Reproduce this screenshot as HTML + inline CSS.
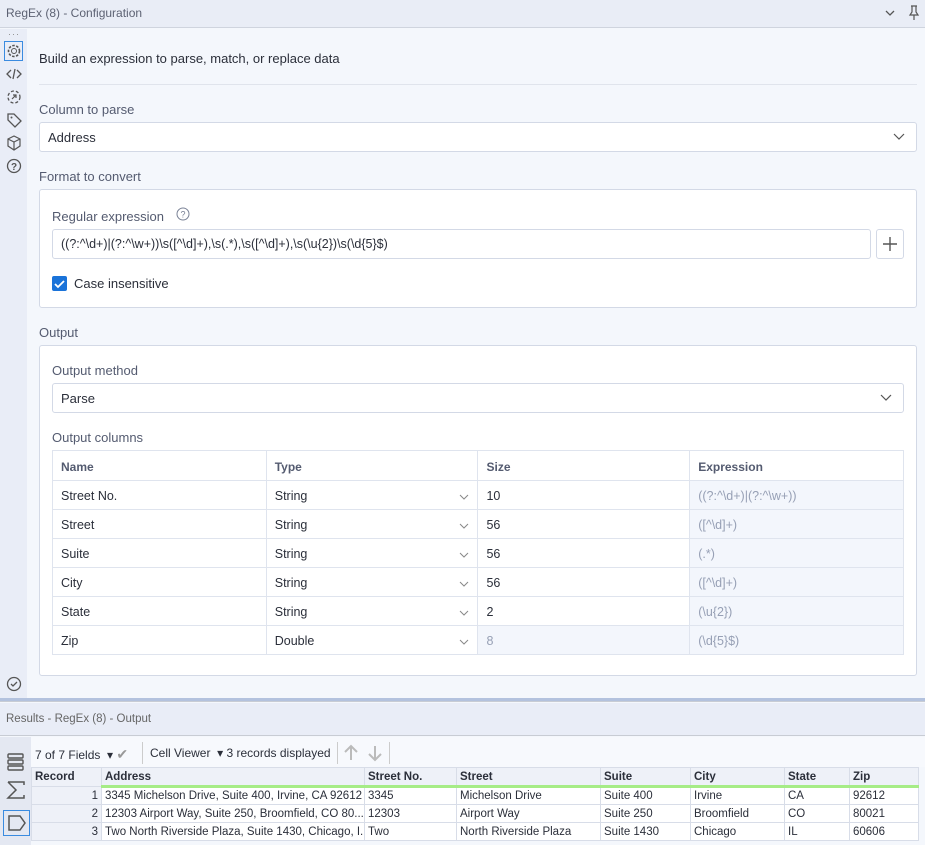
<!DOCTYPE html>
<html><head><style>
*{box-sizing:border-box;margin:0;padding:0}
body{width:925px;height:845px;overflow:hidden;background:#f4f7fc;font-family:"Liberation Sans",sans-serif;font-size:13px;color:#2b2f3a;position:relative}
.a{position:absolute}
.lbl{color:#545b70;font-size:13px}
.box{border:1px solid #d3d9e6;background:#fff;border-radius:3px}
.grid td{border-right:1px solid #dfe4ee;border-bottom:1px solid #dfe4ee;padding:0 8px;height:29px;font-size:12.5px;padding-top:2px}
.chev{float:right;margin-top:4px}
.rg td{border:1px solid #d8dde8;height:18px;padding:0 3px;font-size:11.5px;background:#fff;white-space:nowrap;overflow:hidden}
.rg th{border:1px solid #d8dde8;border-bottom:3px solid #a6ec86;height:19px;padding:0 3px;font-size:11.5px;text-align:left;background:#eef1f8}
</style></head><body>
<div class="a" style="left:0;top:0;width:925px;height:28px;background:#e9edf6;border-bottom:1px solid #cfd4de"></div>
<div class="a" style="left:6px;top:6px;font-size:12px;color:#5d6273">RegEx (8) - Configuration</div>
<svg class="a" style="left:884px;top:8px" width="12" height="10"><path d="M2 3l4 4 4-4" stroke="#555" fill="none" stroke-width="1.3"/></svg>
<svg class="a" style="left:907px;top:5px" width="14" height="16"><path d="M4 1h6M5 1v6l-2 3h8l-2-3V1M7 10v5" stroke="#555" fill="none" stroke-width="1.2"/></svg>
<div class="a" style="left:0;top:29px;width:27px;height:670px;background:#e9edf7"></div>
<div class="a" style="left:8px;top:29px;font-size:9px;color:#888;letter-spacing:1px">···</div>
<div class="a" style="left:4px;top:41px;width:19px;height:20px;border:1px solid #3a8be0"></div>
<svg class="a" style="left:6px;top:43px" width="16" height="16"><circle cx="8" cy="8" r="2.5" stroke="#555" fill="none"/><circle cx="8" cy="8" r="5.5" stroke="#555" fill="none" stroke-dasharray="2.5 1.5" stroke-width="1.6"/></svg>
<svg class="a" style="left:6px;top:67px" width="16" height="14"><path d="M5 3L1 7l4 4M11 3l4 4-4 4M9 2L7 12" stroke="#555" fill="none" stroke-width="1.3"/></svg>
<svg class="a" style="left:6px;top:89px" width="16" height="16"><circle cx="8" cy="8" r="6" stroke="#555" fill="none" stroke-dasharray="3 2" stroke-width="1.3"/><path d="M6 10l4-4M7 6h3v3" stroke="#555" fill="none" stroke-width="1.2"/></svg>
<svg class="a" style="left:6px;top:112px" width="16" height="16"><path d="M2 2h6l7 7-6 6-7-7z" stroke="#555" fill="none" stroke-width="1.3"/><circle cx="5.5" cy="5.5" r="1" fill="#555"/></svg>
<svg class="a" style="left:6px;top:135px" width="16" height="16"><path d="M8 1l6 3v7l-6 4-6-4V4zM2 4l6 3 6-3M8 7v8" stroke="#555" fill="none" stroke-width="1.2"/></svg>
<svg class="a" style="left:6px;top:158px" width="16" height="16"><circle cx="8" cy="8" r="6.5" stroke="#555" fill="none" stroke-width="1.3"/><text x="8" y="12" font-size="10" text-anchor="middle" fill="#555" font-family="Liberation Sans" font-weight="bold">?</text></svg>
<svg class="a" style="left:6px;top:676px" width="16" height="16"><circle cx="8" cy="8" r="6.5" stroke="#555" fill="none" stroke-width="1.3"/><path d="M5 8l2 2 4-4" stroke="#555" fill="none" stroke-width="1.3"/></svg>

<div class="a" style="left:39px;top:51px">Build an expression to parse, match, or replace data</div>
<div class="a" style="left:39px;top:84px;width:878px;height:1px;background:#e0e4ec"></div>
<div class="a lbl" style="left:39px;top:102px">Column to parse</div>
<div class="a box" style="left:39px;top:122px;width:878px;height:30px"></div>
<div class="a" style="left:48px;top:130px">Address</div>
<svg class="a" style="left:893px;top:132px" width="12" height="10"><path d="M1 2l5 5 5-5" stroke="#555" fill="none" stroke-width="1.2"/></svg>
<div class="a lbl" style="left:39px;top:169px">Format to convert</div>
<div class="a box" style="left:39px;top:189px;width:878px;height:119px"></div>
<div class="a lbl" style="left:52px;top:209px">Regular expression</div>
<svg class="a" style="left:176px;top:207px" width="14" height="14"><circle cx="7" cy="7" r="6" stroke="#7a8296" fill="none"/><text x="7" y="10.5" font-size="9" text-anchor="middle" fill="#7a8296" font-family="Liberation Sans">?</text></svg>
<div class="a box" style="left:52px;top:229px;width:819px;height:30px"></div>
<div class="a" style="left:61px;top:237px;font-size:12.5px">((?:^\d+)|(?:^\w+))\s([^\d]+),\s(.*),\s([^\d]+),\s(\u{2})\s(\d{5}$)</div>
<div class="a box" style="left:876px;top:229px;width:28px;height:30px"></div>
<svg class="a" style="left:882px;top:236px" width="16" height="16"><path d="M8 1v14M1 8h14" stroke="#555" stroke-width="1.4"/></svg>
<div class="a" style="left:52px;top:276px;width:15px;height:15px;background:#1a73d9;border-radius:2px"></div>
<svg class="a" style="left:52px;top:276px" width="15" height="15"><path d="M3 8l3 3 6-6" stroke="#fff" fill="none" stroke-width="1.8"/></svg>
<div class="a" style="left:74px;top:276px">Case insensitive</div>
<div class="a lbl" style="left:39px;top:325px">Output</div>
<div class="a box" style="left:39px;top:345px;width:878px;height:331px"></div>
<div class="a lbl" style="left:52px;top:363px">Output method</div>
<div class="a box" style="left:52px;top:383px;width:852px;height:30px"></div>
<div class="a" style="left:61px;top:391px">Parse</div>
<svg class="a" style="left:880px;top:393px" width="12" height="10"><path d="M1 2l5 5 5-5" stroke="#555" fill="none" stroke-width="1.2"/></svg>
<div class="a lbl" style="left:52px;top:430px">Output columns</div>
<table class="a grid" style="left:52px;top:450px;width:852px;border-collapse:collapse;border-left:1px solid #dfe4ee;border-top:1px solid #dfe4ee">
<colgroup><col style="width:214px"><col style="width:212px"><col style="width:212px"><col style="width:214px"></colgroup>
<tr style="color:#545b70;font-weight:bold"><td style="height:30px;font-size:12px">Name</td><td style="font-size:12px">Type</td><td style="font-size:12px">Size</td><td style="font-size:12px">Expression</td></tr>
<tr><td>Street No.</td><td>String<svg class="chev" width="10" height="8"><path d="M1 2l4 4 4-4" stroke="#888" fill="none"/></svg></td><td>10</td><td style="background:#f3f6fc;color:#97a0b5">((?:^\d+)|(?:^\w+))</td></tr>
<tr><td>Street</td><td>String<svg class="chev" width="10" height="8"><path d="M1 2l4 4 4-4" stroke="#888" fill="none"/></svg></td><td>56</td><td style="background:#f3f6fc;color:#97a0b5">([^\d]+)</td></tr>
<tr><td>Suite</td><td>String<svg class="chev" width="10" height="8"><path d="M1 2l4 4 4-4" stroke="#888" fill="none"/></svg></td><td>56</td><td style="background:#f3f6fc;color:#97a0b5">(.*)</td></tr>
<tr><td>City</td><td>String<svg class="chev" width="10" height="8"><path d="M1 2l4 4 4-4" stroke="#888" fill="none"/></svg></td><td>56</td><td style="background:#f3f6fc;color:#97a0b5">([^\d]+)</td></tr>
<tr><td>State</td><td>String<svg class="chev" width="10" height="8"><path d="M1 2l4 4 4-4" stroke="#888" fill="none"/></svg></td><td>2</td><td style="background:#f3f6fc;color:#97a0b5">(\u{2})</td></tr>
<tr><td>Zip</td><td>Double<svg class="chev" width="10" height="8"><path d="M1 2l4 4 4-4" stroke="#888" fill="none"/></svg></td><td style="background:#f3f6fc;color:#97a0b5">8</td><td style="background:#f3f6fc;color:#97a0b5">(\d{5}$)</td></tr>
</table>

<div class="a" style="left:0;top:698px;width:925px;height:4px;background:#b3c2de;border-bottom:1px solid #c8ccd4"></div>
<div class="a" style="left:0;top:703px;width:925px;height:33px;background:#e9edf7;border-bottom:1px solid #c8ccd4"></div>
<div class="a" style="left:6px;top:713px;font-size:11.5px;color:#666">Results - RegEx (8) - Output</div>
<div class="a" style="left:0;top:737px;width:31px;height:108px;background:#e4e8f2"></div>
<div class="a" style="left:31px;top:737px;width:894px;height:30px;background:#f7f9fd"></div>
<svg class="a" style="left:6px;top:752px" width="20" height="20"><rect x="2" y="2" width="15" height="4" rx="1" stroke="#555" fill="none" stroke-width="1.4"/><rect x="2" y="8" width="15" height="4" rx="1" stroke="#555" fill="none" stroke-width="1.4"/><rect x="2" y="14" width="15" height="4" rx="1" stroke="#555" fill="none" stroke-width="1.4"/></svg>
<svg class="a" style="left:6px;top:780px" width="20" height="20"><path d="M2 2h16v3M2 2l8 8-8 8h16v-3" stroke="#555" fill="none" stroke-width="1.5"/></svg>
<div class="a" style="left:3px;top:810px;width:27px;height:26px;border:1px solid #3a8be0"></div>
<svg class="a" style="left:7px;top:813px" width="20" height="20"><path d="M2 3h11l5 7-5 7H2z" stroke="#555" fill="none" stroke-width="1.5"/></svg>
<div class="a" style="left:35px;top:746px;font-size:12px">7 of 7 Fields &nbsp;▾ <span style="color:#999;font-size:14px">✔</span></div>
<div class="a" style="left:142px;top:742px;width:1px;height:22px;background:#ccc"></div>
<div class="a" style="left:150px;top:746px;font-size:12px">Cell Viewer &nbsp;▾ 3 records displayed</div>
<div class="a" style="left:337px;top:742px;width:1px;height:22px;background:#ccc"></div>
<svg class="a" style="left:342px;top:743px" width="42" height="20"><path d="M9 17V3M3 9l6-6 6 6M33 3v14M27 11l6 6 6-6" stroke="#bbb" fill="none" stroke-width="2"/></svg>
<div class="a" style="left:389px;top:742px;width:1px;height:22px;background:#ccc"></div>
<table class="a rg" style="left:31px;top:767px;border-collapse:collapse;table-layout:fixed;width:887px">
<colgroup><col style="width:70px"><col style="width:263px"><col style="width:92px"><col style="width:144px"><col style="width:90px"><col style="width:94px"><col style="width:65px"><col style="width:69px"></colgroup>
<tr><th style="border-bottom:1px solid #d8dde8">Record</th><th>Address</th><th>Street No.</th><th>Street</th><th>Suite</th><th>City</th><th>State</th><th>Zip</th></tr>
<tr><td style="text-align:right;background:#eef1f8">1</td><td>3345 Michelson Drive, Suite 400, Irvine, CA 92612</td><td>3345</td><td>Michelson Drive</td><td>Suite 400</td><td>Irvine</td><td>CA</td><td>92612</td></tr>
<tr><td style="text-align:right;background:#eef1f8">2</td><td>12303 Airport Way, Suite 250, Broomfield, CO 80...</td><td>12303</td><td>Airport Way</td><td>Suite 250</td><td>Broomfield</td><td>CO</td><td>80021</td></tr>
<tr><td style="text-align:right;background:#eef1f8">3</td><td>Two North Riverside Plaza, Suite 1430, Chicago, I...</td><td>Two</td><td>North Riverside Plaza</td><td>Suite 1430</td><td>Chicago</td><td>IL</td><td>60606</td></tr>
</table>
</body></html>
